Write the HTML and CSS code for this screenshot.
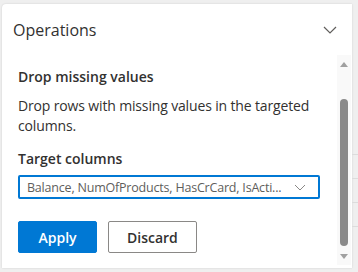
FILE: index.html
```html
<!DOCTYPE html>
<html lang="en">
<head>
    <meta charset="UTF-8">
    <meta name="viewport" content="width=device-width, initial-scale=1.0">
    <title>Operations</title>
    <link rel="stylesheet" href="styles.css">
</head>
<body>

    <div class="layout">
        <!-- Operations pane -->
        <section class="pane">
            <header class="pane-header">
                <h1>Operations</h1>
                <svg class="chevron" width="14" height="8" viewBox="0 0 14 8">
                    <path d="M1 1 L7 7 L13 1" fill="none" stroke="#605e5c" stroke-width="1.2"/>
                </svg>
            </header>

            <div class="pane-body">
                <div class="form">
                    <h2>Drop missing values</h2>
                    <p class="desc">Drop rows with missing values in the targeted columns.</p>

                    <label class="field-label">Target columns</label>
                    <div class="dropdown">
                        <span class="dropdown-text">Balance, NumOfProducts, HasCrCard, IsActi...</span>
                        <svg width="12" height="7" viewBox="0 0 12 7">
                            <path d="M1 1 L6 6 L11 1" fill="none" stroke="#8a8886" stroke-width="1"/>
                        </svg>
                    </div>

                    <div class="actions">
                        <button class="btn btn-primary">Apply</button>
                        <button class="btn">Discard</button>
                    </div>
                </div>

                <!-- scrollbar -->
                <div class="scrollbar">
                    <span class="arrow-up"></span>
                    <div class="track"><div class="thumb"></div></div>
                    <span class="arrow-down"></span>
                </div>
            </div>
        </section>

        <div class="side">
            <div class="side-row"></div>
            <div class="side-row"></div>
            <div class="side-row"></div>
            <div class="side-row"></div>
        </div>
    </div>

</body>
</html>
```

FILE: styles.css
```css
body {
    margin: 0;
    font-family: "Segoe UI", "Open Sans", sans-serif;
    background-color: #efefef;
    color: #323130;
}

.layout {
    display: flex;
    height: 272px;
    padding-top: 4px;
    box-sizing: border-box;
}

.pane {
    width: 350px;
    margin-left: 2px;
    height: 264px;
    background-color: #fff;
    border-radius: 4px 0 0 0;
    box-shadow: 0 0 2px rgba(0, 0, 0, 0.15);
    display: flex;
    flex-direction: column;
}

.pane-header {
    display: flex;
    align-items: center;
    justify-content: space-between;
    padding: 11px 15px 0 11px;
    height: 30px;
}

.pane-header h1 {
    margin: 0;
    font-size: 16px;
    font-weight: 400;
}

.pane-body {
    flex: 1;
    display: flex;
    padding-top: 10px;
}

.form {
    flex: 1;
    padding: 12px 0 0 16px;
}

.form h2 {
    margin: 0;
    font-size: 14px;
    font-weight: 600;
    line-height: 20px;
}

.desc {
    margin: 9px 0 0 0;
    font-size: 14px;
    line-height: 20px;
    width: 300px;
    letter-spacing: -0.15px;
}

.field-label {
    display: block;
    margin-top: 13px;
    font-size: 14px;
    font-weight: 600;
    line-height: 20px;
}

.dropdown {
    margin-top: 6px;
    width: 302px;
    height: 24px;
    box-sizing: border-box;
    border: 2px solid #0078d4;
    border-radius: 2px;
    display: flex;
    align-items: center;
    justify-content: space-between;
    gap: 8px;
    padding: 0 12px 0 7px;
}

.dropdown-text {
    font-size: 12.5px;
    color: #605e5c;
    white-space: nowrap;
    overflow: hidden;
    letter-spacing: -0.2px;
}

.dropdown svg {
    flex-shrink: 0;
}

.actions {
    display: flex;
    gap: 11px;
    margin-top: 22px;
}

.btn {
    height: 32px;
    padding: 0 18px;
    border: 1px solid #8a8886;
    border-radius: 2px;
    background-color: #fff;
    color: #323130;
    font-family: inherit;
    font-size: 14px;
    font-weight: 600;
    min-width: 79px;
}

.btn-primary {
    background-color: #0078d4;
    border-color: #0078d4;
    color: #fff;
}

.scrollbar {
    width: 14px;
    margin-right: 1px;
    background-color: #f9f9f9;
    display: flex;
    flex-direction: column;
    align-items: center;
    padding: 7px 0 6px 0;
    margin-bottom: 3px;
}

.arrow-up, .arrow-down {
    width: 0;
    height: 0;
    border-left: 4px solid transparent;
    border-right: 4px solid transparent;
}

.arrow-up {
    border-bottom: 5px solid #a0a0a0;
}

.arrow-down {
    border-top: 5px solid #a0a0a0;
}

.track {
    flex: 1;
    width: 100%;
    display: flex;
    justify-content: center;
    padding: 32px 0 8px 0;
}

.thumb {
    width: 8px;
    background-color: #8a8a8a;
    border-radius: 4px;
}

.side {
    flex: 1;
    padding-top: 150px;
}

.side-row {
    height: 23px;
    border-top: 1px solid #dcdcdc;
}
```
